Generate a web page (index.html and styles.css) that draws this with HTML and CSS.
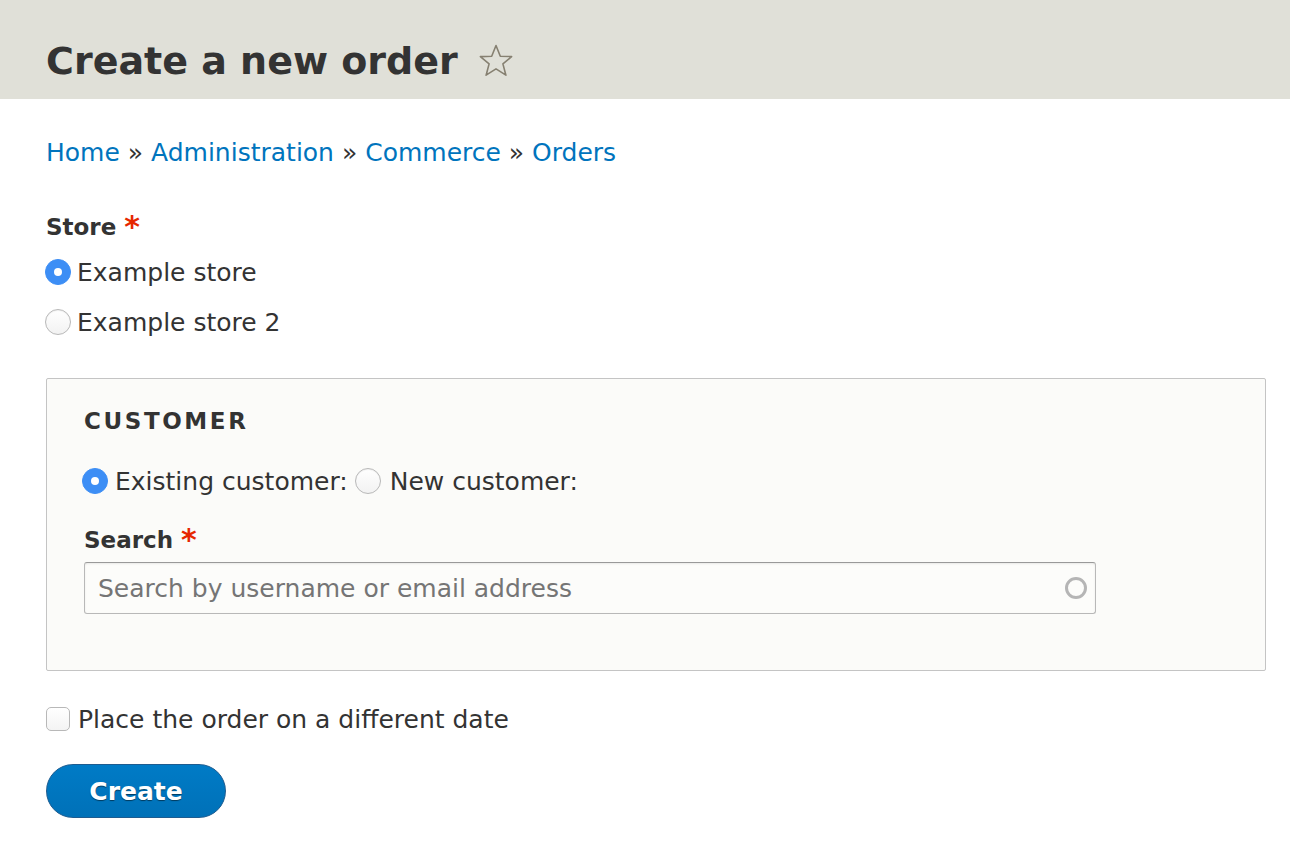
FILE: index.html
```html
<!DOCTYPE html>
<html lang="en">
<head>
<meta charset="utf-8">
<title>Create a new order</title>
<link rel="stylesheet" href="styles.css">
</head>
<body>
<header class="page-header">
  <h1 class="page-title">Create a new order
    <svg class="star" viewBox="0 0 36 36" width="36" height="36" aria-hidden="true">
      <path d="M18 2.5 L22.3 13.2 L33.6 13.6 L24.9 20.9 L27.9 32.2 L18 25.9 L8.1 32.2 L11.1 20.9 L2.4 13.6 L13.7 13.2 Z" fill="none" stroke="#868071" stroke-width="1.6" stroke-linejoin="round"/>
    </svg>
  </h1>
</header>
<main class="content">
  <nav class="breadcrumb">
    <a href="#">Home</a> » <a href="#">Administration</a> » <a href="#">Commerce</a> » <a href="#">Orders</a>
  </nav>

  <div class="form-item store">
    <div class="label">Store <span class="req">*</span></div>
    <label class="radio-row first"><input type="radio" name="store" checked><span>Example store</span></label>
    <label class="radio-row second"><input type="radio" name="store"><span>Example store 2</span></label>
  </div>

  <section class="fieldset">
    <div class="legend">CUSTOMER</div>
    <div class="inline-radios">
      <label class="radio-inline"><input type="radio" name="cust" checked><span>Existing customer:</span></label>
      <label class="radio-inline"><input type="radio" name="cust"><span>New customer:</span></label>
    </div>
    <div class="label search-label">Search <span class="req">*</span></div>
    <div class="input-wrap">
      <input class="text-input" type="text" placeholder="Search by username or email address">
      <span class="throbber"></span>
    </div>
  </section>

  <label class="check-row"><input type="checkbox"><span>Place the order on a different date</span></label>

  <button class="button-primary" type="button">Create</button>
</main>
</body>
</html>
```

FILE: styles.css
```css
* { box-sizing: border-box; }
html, body { margin: 0; padding: 0; background: #fff; }
body {
  font-family: "DejaVu Sans", "Lucida Grande", sans-serif;
  font-size: 25px;
  color: #333;
}
.page-header {
  background: #e0e0d8;
  height: 99px;
  padding: 34px 46px 0;
}
.page-title {
  margin: 0;
  font-size: 38px;
  line-height: 54px;
  font-weight: 700;
  color: #333;
  display: flex;
  align-items: center;
  gap: 20px;
}
.star { flex: none; margin-top: 0; }
.content { padding: 0 24px 0 46px; }
.breadcrumb {
  margin-top: 39px;
  line-height: 30px;
  color: #333;
}
.breadcrumb a { color: #0074bd; text-decoration: none; }
.label {
  font-weight: 700;
  font-size: 23px;
  line-height: 30px;
}
.req { color: #e62600; font-size: 30px; line-height: 20px; vertical-align: -2px; }
.store { margin-top: 44px; }
.radio-row {
  display: flex;
  align-items: center;
  height: 30px;
  gap: 6px;
  margin-left: -1px;
}
.radio-row.first { margin-top: 15px; }
.radio-row.second { margin-top: 20px; }
input[type="radio"] {
  appearance: none;
  -webkit-appearance: none;
  width: 26px;
  height: 26px;
  margin: 0;
  border-radius: 50%;
  border: 1px solid #b8b8b8;
  background: linear-gradient(#fff, #f2f2f2);
  box-shadow: inset 0 1px 1px rgba(0,0,0,0.06);
  flex: none;
  position: relative;
}
input[type="radio"]:checked {
  border-color: #3d8ef5;
  background: #3d8ef5;
  box-shadow: none;
}
input[type="radio"]:checked::after {
  content: "";
  position: absolute;
  width: 8px;
  height: 8px;
  border-radius: 50%;
  background: #fff;
  left: 8px;
  top: 8px;
}
.fieldset {
  margin-top: 41px;
  width: 1220px;
  height: 293px;
  border: 1px solid #c4c4c4;
  border-radius: 2px;
  background: #fbfbf9;
  padding: 27px 37px 0;
}
.legend {
  font-weight: 700;
  font-size: 23px;
  letter-spacing: 2.6px;
  line-height: 30px;
}
.inline-radios {
  display: flex;
  align-items: center;
  margin-top: 30px;
  height: 30px;
  gap: 7px;
  margin-left: -2px;
}
.radio-inline { display: flex; align-items: center; gap: 7px; }
.radio-inline + .radio-inline { gap: 9px; }
.search-label { margin-top: 29px; }
.input-wrap {
  position: relative;
  margin-top: 7px;
  width: 1012px;
}
.text-input {
  display: block;
  width: 100%;
  height: 52px;
  border: 1px solid #b8b8b8;
  border-top-color: #999;
  border-radius: 3px;
  background: #fcfcfa;
  box-shadow: inset 0 1px 2px rgba(0,0,0,0.08);
  padding: 0 13px;
  font-family: inherit;
  font-size: 25px;
  color: #333;
}
.text-input::placeholder { color: #757575; }
.throbber {
  position: absolute;
  right: 9px;
  top: 15px;
  width: 22px;
  height: 22px;
  border-radius: 50%;
  border: 3px solid #b5b5b5;
}
.check-row {
  display: flex;
  align-items: center;
  gap: 8px;
  height: 30px;
  margin-top: 33px;
}
input[type="checkbox"] {
  appearance: none;
  -webkit-appearance: none;
  width: 24px;
  height: 24px;
  margin: 0;
  border: 1px solid #b8b8b8;
  border-radius: 5px;
  background: linear-gradient(#fff, #f4f4f4);
  flex: none;
}
.button-primary {
  display: block;
  margin-top: 30px;
  width: 180px;
  height: 54px;
  border-radius: 27px;
  border: 1px solid #1e5c90;
  background: linear-gradient(#007bc6, #0071b8);
  color: #fff;
  font-family: inherit;
  font-size: 25px;
  font-weight: 700;
  text-shadow: 0 1px 1px rgba(0,0,0,0.5);
  padding: 0;
}
```
